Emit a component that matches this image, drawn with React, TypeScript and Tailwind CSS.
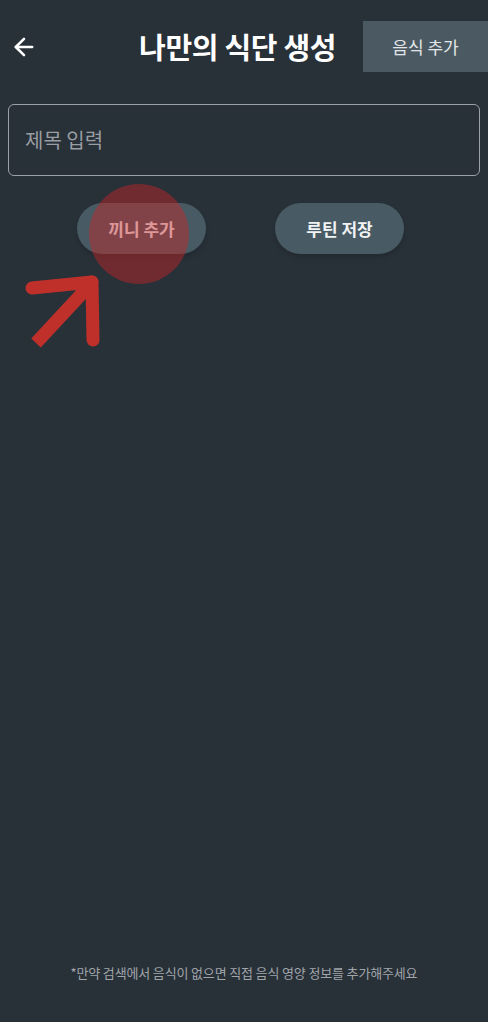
import { ArrowLeft } from 'lucide-react';

export default function App() {
  return (
    <div
      className="relative w-[488px] h-[1022px] bg-[#283038] flex flex-col overflow-hidden"
      style={{ fontFamily: '"Noto Sans CJK KR", "Noto Sans", sans-serif' }}
    >
      <div className="relative flex items-center h-[51px] mt-[21px]">
        <button className="ml-[10px] text-white">
          <ArrowLeft className="w-[28px] h-[28px]" strokeWidth={2.2} />
        </button>
        <h1 className="absolute left-[139px] top-0 h-[51px] flex items-center text-[29px] font-bold text-white tracking-[-0.3px]">
          나만의 식단 생성
        </h1>
        <button className="ml-auto w-[125px] h-[51px] bg-[#4b5a62] text-[17px] text-[#e4e7e9]">
          음식 추가
        </button>
      </div>

      <div className="mx-[8px] mt-[32px] h-[72px] border-[1.5px] border-[#9ba1a6] rounded-[6px] flex items-center px-[16px]">
        <span className="text-[20px] text-[#9a9ea3]">제목 입력</span>
      </div>

      <div className="flex gap-[69px] ml-[77px] mt-[27px]">
        <button className="w-[129px] h-[51px] rounded-full bg-[#485a63] text-[17px] font-bold text-[#f0f2f3] shadow-md">
          끼니 추가
        </button>
        <button className="w-[129px] h-[51px] rounded-full bg-[#485a63] text-[17px] font-bold text-[#f0f2f3] shadow-md">
          루틴 저장
        </button>
      </div>

      <p className="mt-auto mb-[40px] text-center text-[13px] text-[#a0a5aa] tracking-[-0.15px]">
        *만약 검색에서 음식이 없으면 직접 음식 영양 정보를 추가해주세요
      </p>

      <svg className="absolute left-0 top-0 pointer-events-none" width="488" height="400">
        <circle cx="139" cy="234" r="50" fill="rgba(200,38,40,0.45)" />
        <g stroke="#c0302a" strokeWidth="13" strokeLinecap="round" fill="none">
          <line x1="32" y1="288" x2="92" y2="282" />
          <line x1="92" y1="282" x2="93" y2="340" />
          <line x1="88" y1="287" x2="36" y2="343" strokeLinecap="butt" />
        </g>
      </svg>
    </div>
  );
}
